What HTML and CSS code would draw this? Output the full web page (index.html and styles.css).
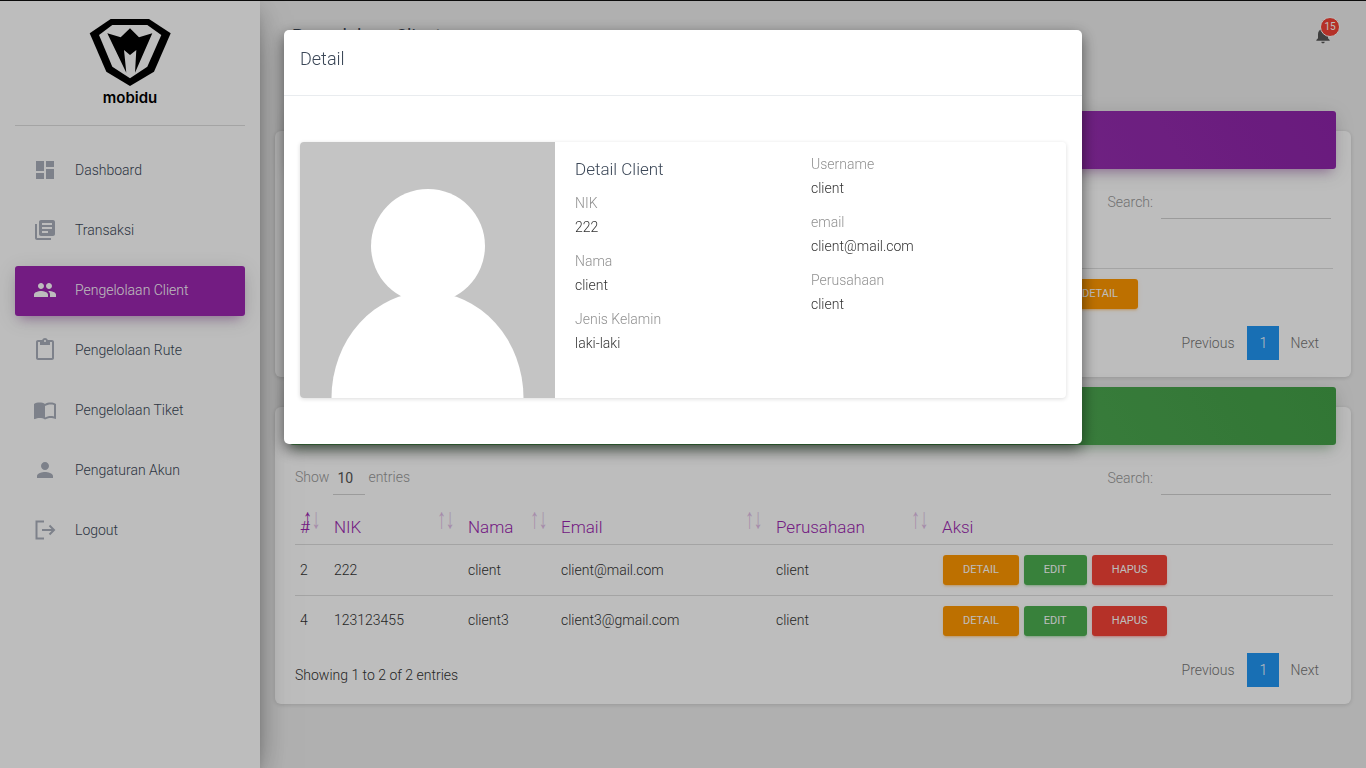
FILE: index.html
```html
<!DOCTYPE html>
<html lang="en">
<head>
    <meta charset="UTF-8">
    <title>Pengelolaan Client</title>
    <link rel="stylesheet" href="styles.css">
</head>
<body>
    <div class="top-line"></div>
    <div class="wrapper">
        <aside class="sidebar">
            <div class="logo">
                <svg width="82" height="68" viewBox="90 18 82 68">
                    <polygon points="111.7,19 150,19 171.7,33.3 155,71.7 131,86 107.3,71.7 90.7,33.3" fill="#000"/>
                    <polygon points="113.3,25 148.3,25 162.3,35 148.3,66.7 131,78.3 113.3,66.7 100,35" fill="#fff"/>
                    <polygon points="108.3,33.3 121.7,37.3 131,28.3 140,37.3 153.3,33.3 136,72.7 137.3,50 131,55 125,50 127.3,72.7" fill="#000"/>
                </svg>
                <span class="logo-text">mobidu</span>
            </div>
            <ul class="nav">
                <li class="nav-item">
                    <svg class="nav-icon" viewBox="0 0 24 24"><path d="M3 13h8V3H3v10zm0 8h8v-6H3v6zm10 0h8V11h-8v10zm0-18v6h8V3h-8z"/></svg>
                    Dashboard
                </li>
                <li class="nav-item">
                    <svg class="nav-icon" viewBox="0 0 24 24"><path d="M4 6H2v14c0 1.1.9 2 2 2h14v-2H4V6zm16-4H8c-1.1 0-2 .9-2 2v12c0 1.1.9 2 2 2h12c1.1 0 2-.9 2-2V4c0-1.1-.9-2-2-2zm-1 9H9V9h10v2zm-4 4H9v-2h6v2zm4-8H9V5h10v2z"/></svg>
                    Transaksi
                </li>
                <li class="nav-item active">
                    <svg class="nav-icon" viewBox="0 0 24 24"><path d="M16 11c1.66 0 2.99-1.34 2.99-3S17.66 5 16 5c-1.66 0-3 1.34-3 3s1.34 3 3 3zm-8 0c1.66 0 2.99-1.34 2.99-3S9.66 5 8 5C6.34 5 5 6.34 5 8s1.34 3 3 3zm0 2c-2.33 0-7 1.17-7 3.5V19h14v-2.5c0-2.33-4.67-3.5-7-3.5zm8 0c-.29 0-.62.02-.97.05 1.16.84 1.97 1.97 1.97 3.45V19h6v-2.5c0-2.33-4.67-3.5-7-3.5z"/></svg>
                    Pengelolaan Client
                </li>
                <li class="nav-item">
                    <svg class="nav-icon" viewBox="0 0 24 24"><path d="M19 2h-4.18C14.4.84 13.3 0 12 0c-1.3 0-2.4.84-2.82 2H5c-1.1 0-2 .9-2 2v16c0 1.1.9 2 2 2h14c1.1 0 2-.9 2-2V4c0-1.1-.9-2-2-2zm-7 0c.55 0 1 .45 1 1s-.45 1-1 1-1-.45-1-1 .45-1 1-1zm7 18H5V4h2v3h10V4h2v16z"/></svg>
                    Pengelolaan Rute
                </li>
                <li class="nav-item">
                    <svg class="nav-icon" viewBox="0 0 24 24"><path d="M21 5c-1.11-.35-2.33-.5-3.5-.5-1.95 0-4.05.4-5.5 1.5-1.45-1.1-3.55-1.5-5.5-1.5S2.45 4.9 1 6v14.65c0 .25.25.5.5.5.1 0 .15-.05.25-.05C3.1 20.45 5.05 20 6.5 20c1.95 0 4.05.4 5.5 1.5 1.35-.85 3.8-1.5 5.5-1.5 1.65 0 3.35.3 4.75 1.05.1.05.15.05.25.05.25 0 .5-.25.5-.5V6c-.6-.45-1.25-.75-2-1zm0 13.5c-1.1-.35-2.3-.5-3.5-.5-1.7 0-4.15.65-5.5 1.5V8c1.35-.85 3.8-1.5 5.5-1.5 1.2 0 2.4.15 3.5.5v11.5z"/></svg>
                    Pengelolaan Tiket
                </li>
                <li class="nav-item">
                    <svg class="nav-icon" viewBox="0 0 24 24"><path d="M12 12c2.21 0 4-1.79 4-4s-1.79-4-4-4-4 1.79-4 4 1.79 4 4 4zm0 2c-2.67 0-8 1.34-8 4v2h16v-2c0-2.66-5.33-4-8-4z"/></svg>
                    Pengaturan Akun
                </li>
                <li class="nav-item">
                    <svg class="nav-icon logout-icon" viewBox="0 0 24 24"><path d="M11 3.5H3.5v17H11M9 12h12M16.5 7.5L21 12l-4.5 4.5"/></svg>
                    Logout
                </li>
            </ul>
        </aside>

        <main class="main">
            <header class="topbar">
                <h2 class="page-title">Pengelolaan Client</h2>
                <div class="bell">
                    <svg width="20" height="20" viewBox="0 0 24 24"><path d="M12 22c1.1 0 2-.9 2-2h-4c0 1.1.89 2 2 2zm6-6v-5c0-3.07-1.64-5.64-4.5-6.32V4c0-.83-.67-1.5-1.5-1.5s-1.5.67-1.5 1.5v.68C7.63 5.36 6 7.92 6 11v5l-2 2v1h16v-1l-2-2z"/></svg>
                    <span class="badge">15</span>
                </div>
            </header>

            <section class="card">
                <div class="card-header purple"></div>
                <div class="card-body">
                    <div class="toolbar">
                        <div class="length">Show <span class="select">10</span> entries</div>
                        <div class="search">Search: <span class="search-input"></span></div>
                    </div>
                    <!-- this table sits behind the modal, only the end of it shows -->
                    <table class="table">
                        <colgroup>
                            <col class="c-behind"><col>
                        </colgroup>
                        <thead>
                            <tr>
                                <th></th>
                                <th></th>
                            </tr>
                        </thead>
                        <tbody>
                            <tr class="last">
                                <td></td>
                                <td><div class="actions"><span class="btn orange">Detail</span></div></td>
                            </tr>
                        </tbody>
                    </table>
                    <div class="table-foot">
                        <div class="info">Showing 1 to 1 of 1 entries</div>
                        <div class="pagination">
                            <span class="page-link prev">Previous</span>
                            <span class="page-num">1</span>
                            <span class="page-link next">Next</span>
                        </div>
                    </div>
                </div>
            </section>

            <section class="card">
                <div class="card-header green"></div>
                <div class="card-body">
                    <div class="toolbar">
                        <div class="length">Show <span class="select">10</span> entries</div>
                        <div class="search">Search: <span class="search-input"></span></div>
                    </div>
                    <table class="table">
                        <colgroup>
                            <col class="c1"><col class="c2"><col class="c3"><col class="c4"><col class="c5"><col>
                        </colgroup>
                        <thead>
                            <tr>
                                <th class="sort first">#</th>
                                <th class="sort">NIK</th>
                                <th class="sort">Nama</th>
                                <th class="sort">Email</th>
                                <th class="sort">Perusahaan</th>
                                <th>Aksi</th>
                            </tr>
                        </thead>
                        <tbody>
                            <tr>
                                <td>2</td>
                                <td>222</td>
                                <td>client</td>
                                <td>client@mail.com</td>
                                <td>client</td>
                                <td>
                                    <div class="actions">
                                        <span class="btn orange">Detail</span>
                                        <span class="btn green-btn">Edit</span>
                                        <span class="btn red">Hapus</span>
                                    </div>
                                </td>
                            </tr>
                            <tr class="last">
                                <td>4</td>
                                <td>123123455</td>
                                <td>client3</td>
                                <td>client3@gmail.com</td>
                                <td>client</td>
                                <td>
                                    <div class="actions">
                                        <span class="btn orange">Detail</span>
                                        <span class="btn green-btn">Edit</span>
                                        <span class="btn red">Hapus</span>
                                    </div>
                                </td>
                            </tr>
                        </tbody>
                    </table>
                    <div class="table-foot">
                        <div class="info">Showing 1 to 2 of 2 entries</div>
                        <div class="pagination">
                            <span class="page-link prev">Previous</span>
                            <span class="page-num">1</span>
                            <span class="page-link next">Next</span>
                        </div>
                    </div>
                </div>
            </section>
        </main>
    </div>

    <div class="backdrop"></div>

    <div class="modal-wrap">
        <div class="modal">
            <div class="modal-header">Detail</div>
            <div class="modal-body">
                <div class="profile">
                    <svg class="avatar" width="255" height="256" viewBox="0 0 255 256">
                        <rect width="255" height="256" fill="#c4c4c4"/>
                        <circle cx="128" cy="104" r="57" fill="#fff"/>
                        <ellipse cx="127.5" cy="256" rx="96" ry="106" fill="#fff"/>
                    </svg>
                    <div class="profile-col first-col">
                        <h4 class="profile-title">Detail Client</h4>
                        <div class="field"><div class="label">NIK</div><div class="value">222</div></div>
                        <div class="field"><div class="label">Nama</div><div class="value">client</div></div>
                        <div class="field"><div class="label">Jenis Kelamin</div><div class="value">laki-laki</div></div>
                    </div>
                    <div class="profile-col second-col">
                        <div class="field"><div class="label">Username</div><div class="value">client</div></div>
                        <div class="field"><div class="label">email</div><div class="value">client@mail.com</div></div>
                        <div class="field"><div class="label">Perusahaan</div><div class="value">client</div></div>
                    </div>
                </div>
            </div>
        </div>
    </div>
</body>
</html>
```

FILE: styles.css
```css
* {
    box-sizing: border-box;
}

body {
    margin: 0;
    background-color: #eee;
    color: #3c4858;
    font-family: Roboto, "Liberation Sans", sans-serif;
    font-size: 14px;
    font-weight: 300;
    overflow: hidden;
}

.top-line {
    height: 1px;
    background-color: #111;
}

.wrapper {
    display: flex;
    height: 767px;
}

/* Sidebar */
.sidebar {
    position: relative;
    z-index: 2;
    flex: 0 0 260px;
    background-color: #fff;
    box-shadow: 0 16px 38px -12px rgba(0, 0, 0, 0.56), 0 4px 25px 0 rgba(0, 0, 0, 0.12), 0 8px 10px -5px rgba(0, 0, 0, 0.2);
}

.logo {
    display: flex;
    flex-direction: column;
    align-items: center;
    height: 125px;
    margin: 0 15px;
    padding-top: 17px;
    border-bottom: 1px solid #ddd;
}

.logo-text {
    margin-top: 3px;
    color: #000;
    font-family: Inter, sans-serif;
    font-size: 15px;
    font-weight: 600;
    line-height: 18px;
}

.nav {
    list-style: none;
    margin: 0;
    padding: 20px 15px 0;
}

.nav-item {
    display: flex;
    align-items: center;
    height: 50px;
    margin-bottom: 10px;
    padding: 0 0 2px 18px;
    border-radius: 3px;
}

.nav-item.active {
    background-color: #9c27b0;
    color: #fff;
    box-shadow: 0 4px 20px 0 rgba(0, 0, 0, 0.14), 0 7px 10px -5px rgba(156, 39, 176, 0.4);
}

.nav-icon {
    flex: none;
    width: 24px;
    height: 24px;
    margin-right: 18px;
    fill: #a9afbb;
}

.nav-item.active .nav-icon {
    fill: #fff;
}

.logout-icon {
    fill: none;
    stroke: #a9afbb;
    stroke-width: 2;
}

/* Main area */
.main {
    flex: 1;
    padding: 0 15px;
}

.topbar {
    display: flex;
    justify-content: space-between;
    height: 130px;
    padding: 21px 18px 0 17px;
}

.page-title {
    margin: 0;
    font-size: 18px;
    font-weight: 400;
    line-height: 28px;
}

.bell {
    position: relative;
    width: 20px;
    height: 20px;
    margin-top: 3px;
    fill: #555;
}

.badge {
    position: absolute;
    top: -8px;
    left: 7px;
    width: 20px;
    height: 20px;
    border-radius: 50%;
    background-color: #f44336;
    border: 1px solid #fff;
    color: #fff;
    font-size: 10px;
    font-weight: 400;
    line-height: 18px;
    text-align: center;
}

.card {
    margin-bottom: 30px;
    padding-bottom: 17px;
    border-radius: 6px;
    background-color: #fff;
    box-shadow: 0 1px 4px 0 rgba(0, 0, 0, 0.14);
}

.card-header {
    height: 58px;
    margin: 0 15px;
    border-radius: 3px;
    transform: translateY(-20px);
    margin-bottom: -20px;
}

.purple {
    background: linear-gradient(60deg, #ab47bc, #8e24aa);
    box-shadow: 0 4px 20px 0 rgba(0, 0, 0, 0.14), 0 7px 10px -5px rgba(156, 39, 176, 0.4);
}

.green {
    background: linear-gradient(60deg, #66bb6a, #43a047);
    box-shadow: 0 4px 20px 0 rgba(0, 0, 0, 0.14), 0 7px 10px -5px rgba(76, 175, 80, 0.4);
}

.card-body {
    padding: 0 18px 0 20px;
}

.toolbar {
    display: flex;
    justify-content: space-between;
    height: 50px;
    padding-top: 15px;
    color: #999;
}

.length,
.search {
    display: flex;
    align-items: flex-start;
    line-height: 34px;
}

.select {
    width: 32px;
    height: 35px;
    margin: 0 3px 0 4px;
    padding-left: 4px;
    border-bottom: 1px solid #d2d2d2;
    color: #555;
    font-weight: 400;
    line-height: 36px;
}

.search {
    margin-right: 2px;
    line-height: 36px;
}

.search-input {
    width: 170px;
    height: 35px;
    margin-left: 8px;
    border-bottom: 1px solid #d2d2d2;
}

.table {
    width: 100%;
    margin-top: 10px;
    border-collapse: separate;
    border-spacing: 0;
    table-layout: fixed;
}

.c1 { width: 34px; }
.c2 { width: 134px; }
.c3 { width: 93px; }
.c4 { width: 215px; }
.c5 { width: 166px; }
.c-behind { width: 761px; }

.table th {
    position: relative;
    height: 40px;
    padding: 4px 5px 0;
    border-bottom: 1px solid #ddd;
    color: #9c27b0;
    font-size: 17px;
    font-weight: 300;
    line-height: 24px;
    text-align: left;
}

/* sort arrows, stretched to the tall thin shape of the original */
.sort::before,
.sort::after {
    position: absolute;
    top: 3px;
    font-family: "Liberation Sans", sans-serif;
    font-size: 18px;
    line-height: 20px;
    opacity: 0.3;
    transform: scaleY(1.6);
}

.sort::before {
    content: "\2191";
    right: 17px;
}

.sort::after {
    content: "\2193";
    right: 8.5px;
}

.sort.first::before {
    opacity: 1;
}

.table td {
    height: 51px;
    padding: 0 5px;
    border-bottom: 1px solid #ddd;
    color: #333;
}

.table .last td {
    height: 50px;
    padding-bottom: 2px;
    border-bottom: 0;
}

.actions {
    display: flex;
    gap: 5px;
    margin-left: 1px;
}

.last .actions {
    margin-top: 2px;
}

.btn {
    height: 30px;
    padding: 0 20px;
    border-radius: 3px;
    color: #fff;
    font-size: 11px;
    font-weight: 400;
    line-height: 30px;
    text-transform: uppercase;
}

.orange {
    background-color: #ff9800;
    box-shadow: 0 2px 2px 0 rgba(255, 152, 0, 0.14), 0 3px 1px -2px rgba(255, 152, 0, 0.2), 0 1px 5px 0 rgba(255, 152, 0, 0.12);
}

.green-btn {
    background-color: #4caf50;
    box-shadow: 0 2px 2px 0 rgba(76, 175, 80, 0.14), 0 3px 1px -2px rgba(76, 175, 80, 0.2), 0 1px 5px 0 rgba(76, 175, 80, 0.12);
}

.red {
    background-color: #f44336;
    box-shadow: 0 2px 2px 0 rgba(244, 67, 54, 0.14), 0 3px 1px -2px rgba(244, 67, 54, 0.2), 0 1px 5px 0 rgba(244, 67, 54, 0.12);
}

.table-foot {
    display: flex;
    justify-content: space-between;
    margin-top: 7px;
}

.info {
    padding-top: 10px;
    color: #333;
    line-height: 24px;
}

.pagination {
    display: flex;
    height: 34px;
    margin-right: 1px;
    line-height: 34px;
    color: #777;
}

.prev {
    padding: 0 13px 0 12px;
}

.next {
    padding: 0 13px 0 11px;
}

.page-num {
    width: 32px;
    background-color: #2196f3;
    color: #fff;
    text-align: center;
}

/* Modal */
.backdrop {
    position: fixed;
    top: 0;
    left: 0;
    right: 0;
    bottom: 0;
    z-index: 5;
    background-color: #000;
    opacity: 0.26;
}

.modal-wrap {
    position: fixed;
    top: 0;
    left: 0;
    right: 0;
    bottom: 0;
    z-index: 6;
    padding: 30px 0 0 284px;
}

.modal {
    width: 798px;
    height: 414px;
    border-radius: 5px;
    background-color: #fff;
    box-shadow: 0 5px 15px rgba(0, 0, 0, 0.55);
}

.modal-header {
    height: 66px;
    padding: 16px;
    border-bottom: 1px solid #e9ecef;
    font-size: 18px;
    line-height: 26px;
}

.modal-body {
    padding: 46px 16px;
}

.profile {
    display: flex;
    height: 256px;
    border-radius: 4px;
    box-shadow: 0 1px 4px 0 rgba(0, 0, 0, 0.14);
}

.avatar {
    flex: none;
    border-radius: 4px 0 0 4px;
}

.profile-col {
    line-height: 24px;
}

.first-col {
    width: 256px;
    padding: 15px 0 0 20px;
}

.second-col {
    padding-top: 10px;
}

.profile-title {
    margin: 0 0 10px;
    font-size: 17px;
    font-weight: 300;
    line-height: 24px;
}

.field {
    margin-bottom: 10px;
}

.label {
    color: #919191;
}

.value {
    color: #333;
}
```
